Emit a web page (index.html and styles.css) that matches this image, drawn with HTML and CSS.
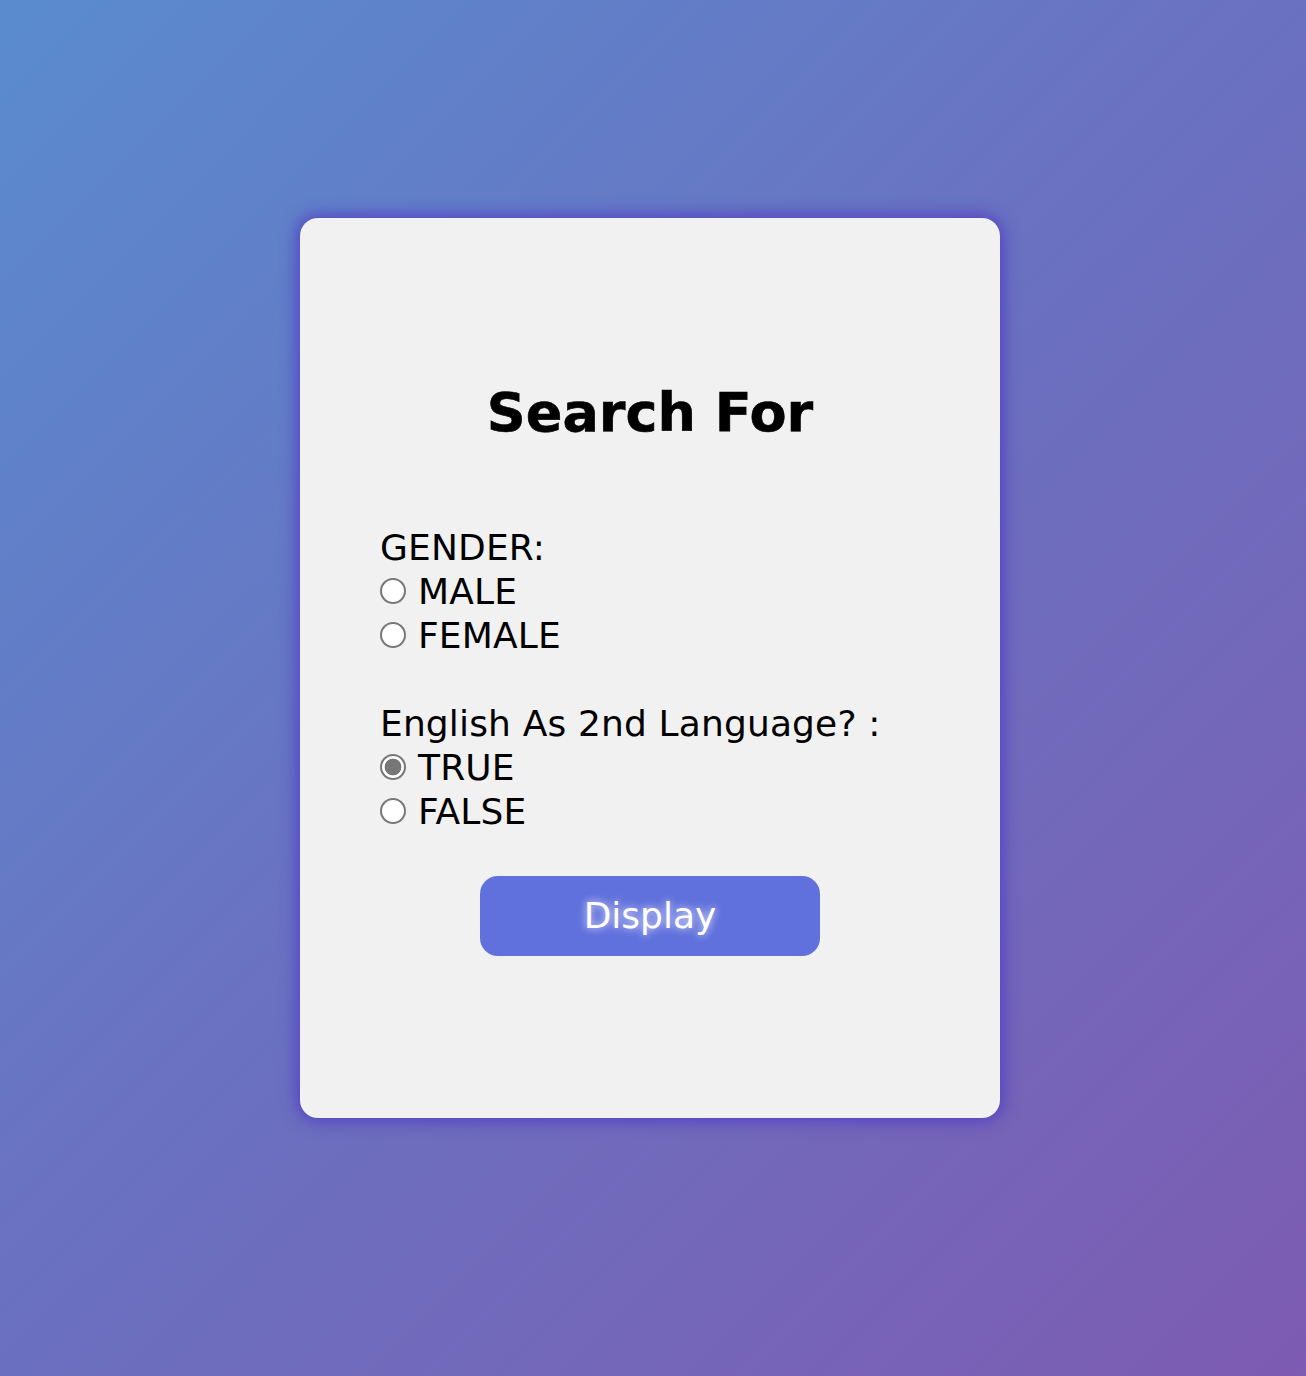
FILE: index.html
```html
<!DOCTYPE html>
<html lang="en">
<head>
<meta charset="utf-8">
<title>Search For</title>
<link rel="stylesheet" href="styles.css">
</head>
<body>
  <main class="card">
    <h1 class="title">Search For</h1>
    <form class="form">
      <div class="group">
        <div class="label">GENDER:</div>
        <label class="option"><input type="radio" name="gender" value="male"><span>MALE</span></label>
        <label class="option"><input type="radio" name="gender" value="female"><span>FEMALE</span></label>
      </div>
      <div class="group">
        <div class="label">English As 2nd Language? :</div>
        <label class="option"><input type="radio" name="esl" value="true" checked><span>TRUE</span></label>
        <label class="option"><input type="radio" name="esl" value="false"><span>FALSE</span></label>
      </div>
      <div class="actions">
        <button type="button" class="btn">Display</button>
      </div>
    </form>
  </main>
</body>
</html>
```
FILE: styles.css
```css
html, body {
  margin: 0;
  padding: 0;
}
body {
  min-height: 1376px;
  background: linear-gradient(135deg, #5a8bcf 0%, #6b70c0 50%, #7d5cb2 100%);
  font-family: "DejaVu Sans", Verdana, sans-serif;
  color: #000;
  display: flex;
  align-items: flex-start;
  padding: 218px 0 0 300px;
  box-sizing: border-box;
}
.card {
  width: 700px;
  height: 900px;
  box-sizing: border-box;
  background: #f1f1f1;
  border-radius: 18px;
  box-shadow: 0 0 16px 3px rgba(80, 60, 196, 0.9);
  padding: 162px 80px 0 80px;
  display: flex;
  flex-direction: column;
}
.title {
  margin: 0;
  font-size: 54px;
  line-height: 66px;
  font-weight: bold;
  text-align: center;
  -webkit-text-stroke: 0.6px #000;
}
.form {
  margin-top: 80px;
  display: flex;
  flex-direction: column;
  gap: 44px;
  font-size: 36px;
  line-height: 44px;
  letter-spacing: 0.15px;
}
.group {
  display: flex;
  flex-direction: column;
}
.option {
  display: flex;
  align-items: center;
  gap: 12px;
}
.option input {
  appearance: none;
  -webkit-appearance: none;
  margin: 0;
  width: 26px;
  height: 26px;
  border: 2px solid #777;
  border-radius: 50%;
  background: #fff;
  box-sizing: border-box;
  flex: none;
  position: relative;
  top: -1px;
}
.option input:checked {
  background: radial-gradient(circle, #777 0 8px, #fff 8.7px);
}
.actions {
  display: flex;
  justify-content: center;
  margin-top: -2px;
}
.btn {
  width: 340px;
  height: 80px;
  border: none;
  border-radius: 18px;
  background: #6070dc;
  color: #fff;
  font-family: "DejaVu Sans", Verdana, sans-serif;
  font-size: 36px;
  line-height: 44px;
  text-shadow: 0 0 8px rgba(255, 255, 255, 0.9);
  padding: 0;
}
```
